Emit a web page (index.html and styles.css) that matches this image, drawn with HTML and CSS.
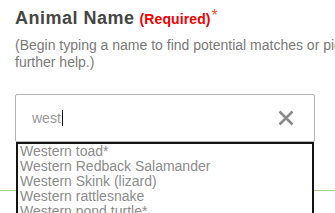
FILE: index.html
```html
<!DOCTYPE html>
<html>
<head>
<meta charset="utf-8">
<link rel="stylesheet" href="styles.css">
</head>
<body>
<div class="field">
  <label class="title"><span class="name">Animal Name</span> <span class="req">(Required)</span><span class="star">*</span></label>
  <p class="hint">(Begin typing a name to find potential matches or pick from the list for further help.)</p>
  <div class="combo">
    <div class="input">
      <span class="value">west</span><span class="caret"></span>
      <svg class="clear" width="16" height="16" viewBox="0 0 16 16"><path d="M1.5 1.5 L14.5 14.5 M14.5 1.5 L1.5 14.5" stroke="#8a8a8a" stroke-width="2.6" fill="none"/></svg>
    </div>
    <ul class="menu">
      <li>Western toad*</li>
      <li>Western Redback Salamander</li>
      <li>Western Skink (lizard)</li>
      <li>Western rattlesnake</li>
      <li>Western pond turtle*</li>
    </ul>
  </div>
  <div class="rule"></div>
</div>
</body>
</html>
```
FILE: styles.css
```css
html, body {
  margin: 0;
  padding: 0;
  background: #fff;
  overflow: hidden;
}
body {
  font-family: "Liberation Sans", Arial, sans-serif;
  width: 335px;
  height: 213px;
}
.field {
  padding: 8px 0 0 15px;
}
.title {
  display: block;
  font-size: 18px;
  line-height: 21px;
  font-weight: bold;
  color: #464646;
  white-space: nowrap;
}
.name {
  letter-spacing: 0.5px;
}
.req {
  font-size: 14px;
  color: #f00000;
  letter-spacing: 0.1px;
}
.star {
  font-size: 16px;
  color: #e0553f;
  font-weight: normal;
  vertical-align: 3px;
  line-height: 0;
  margin-left: 1px;
}
.hint {
  margin: 7px 0 0 0;
  font-size: 14px;
  line-height: 17px;
  color: #7a7a7a;
  width: 450px;
  height: 34px;
  overflow: hidden;
}
.combo {
  position: relative;
  margin-top: 23px;
  width: 300px;
}
.input {
  box-sizing: border-box;
  height: 48px;
  width: 300px;
  border: 1px solid #b4b4b4;
  border-radius: 2px;
  display: flex;
  align-items: center;
  padding: 0 20px 0 16px;
  font-size: 14px;
  color: #999;
}
.caret {
  display: inline-block;
  width: 1px;
  height: 16px;
  background: #111;
  margin-left: 1px;
}
.clear {
  margin-left: auto;
}
.menu {
  position: absolute;
  left: 1px;
  top: 48px;
  width: 298px;
  box-sizing: border-box;
  margin: 0;
  padding: 0 0 0 2px;
  list-style: none;
  border: 2px solid #141414;
  border-bottom: none;
  background: #fff;
  font-size: 14px;
  line-height: 15px;
  color: #8c8c8c;
  z-index: 2;
}
.menu li {
  white-space: nowrap;
}
.rule {
  margin-top: 48px;
  margin-left: -15px;
  height: 1px;
  background: #9fcf82;
  width: 335px;
}
```
